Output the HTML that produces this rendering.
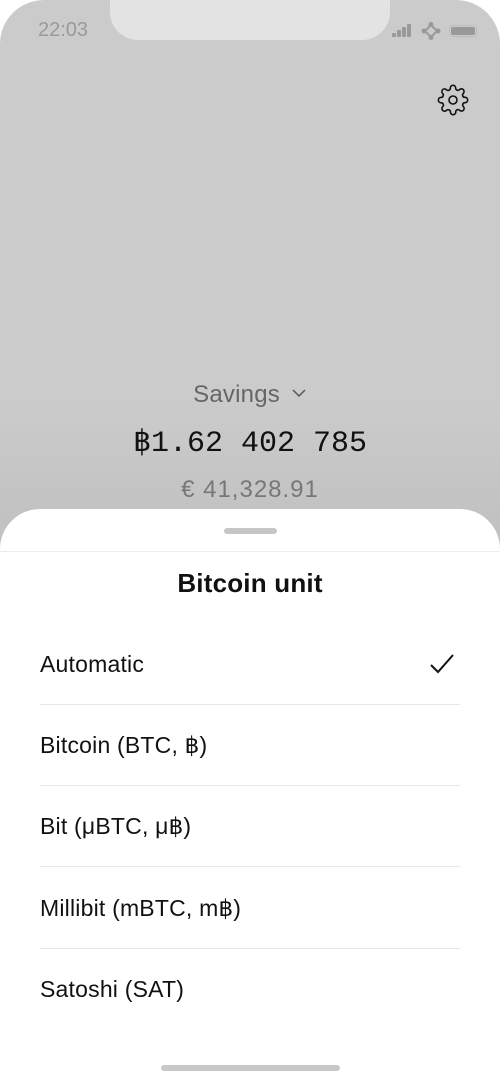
<!DOCTYPE html>
<html><head><style>
*{margin:0;padding:0;box-sizing:border-box}
body{width:500px;height:1083px;overflow:hidden;font-family:"Liberation Sans",sans-serif;background:#fff}
.top{position:absolute;left:0;top:0;width:500px;height:560px;background:linear-gradient(#cbcbcb 0,#cbcbcb 400px,#c2c2c2 520px);border-radius:44px 44px 0 0}
.notch{position:absolute;left:110px;top:0;width:280px;height:40px;background:#e3e3e3;border-radius:0 0 28px 28px}
.time{position:absolute;left:38px;top:19px;font-size:20px;color:#9a9a9a}
.sheet{position:absolute;left:0;top:509px;width:500px;height:574px;background:#fff;border-radius:40px 40px 0 0}
.handle{position:absolute;left:224px;top:19px;width:53px;height:6px;border-radius:3px;background:#c6c6c6}
.div0{position:absolute;left:0;top:42px;width:500px;height:1px;background:#ececec}
.title{position:absolute;top:59px;width:500px;text-align:center;font-size:26px;letter-spacing:0.2px;font-weight:bold;color:#111}
.row{position:absolute;left:40px;width:420px;height:81px;font-size:23px;letter-spacing:0.2px;color:#111;line-height:81px}
.row.b{border-bottom:1px solid #e8e8e8}
.c{position:absolute;top:386px;width:500px;text-align:center}
.home{position:absolute;left:161px;top:1065px;width:179px;height:6px;border-radius:3px;background:#c8c8c8}
</style></head><body>
<div class="top">
<div class="notch"></div>
<div class="time">22:03</div>
<svg style="position:absolute;left:392px;top:22px" width="90" height="18" viewBox="0 0 90 18">
<g fill="#999"><rect x="0" y="11" width="4" height="4" rx="1"/><rect x="5" y="8" width="4" height="7" rx="1"/><rect x="10" y="5" width="4" height="10" rx="1"/><rect x="15" y="2" width="4" height="13" rx="1"/>
<circle cx="39" cy="2.5" r="2.5"/><circle cx="39" cy="15.5" r="2.5"/><circle cx="32" cy="9" r="2.5"/><circle cx="46" cy="9" r="2.5"/></g>
<path d="M39 3 L45 9 L39 15 L33 9Z" fill="none" stroke="#999" stroke-width="2"/>
<rect x="57.5" y="3.5" width="27" height="11" rx="3" fill="none" stroke="#bbb"/><rect x="59" y="5" width="24" height="8" rx="2" fill="#999"/>
</svg>
<svg style="position:absolute;left:437px;top:84px" width="32" height="32" viewBox="0 0 24 24" fill="none" stroke="#111" stroke-width="1.2"><circle cx="12" cy="12" r="3"/><path d="M19.4 15a1.65 1.65 0 0 0 .33 1.82l.06.06a2 2 0 1 1-2.830 2.83l-.06-.06a1.65 1.65 0 0 0-1.82-.33 1.65 1.65 0 0 0-1 1.51V21a2 2 0 1 1-4 0v-.09A1.65 1.650 0 0 0 9 19.4a1.65 1.65 0 0 0-1.82.33l-.06.06a2 2 0 1 1-2.83-2.830l.06-.06a1.65 1.65 0 0 0 .33-1.82 1.65 1.65 0 0 0-1.51-1H3a2 2 0 1 1 0-4h.09A1.65 1.65 0 0 0 4.6 9a1.65 1.65 0 0 0-.33-1.82l-.06-.06a2 2 0 1 1 2.83-2.83l.06.06a1.65 1.65 0 0 0 1.82.33H9a1.65 1.65 0 0 0 1-1.51V3a2 2 0 1 1 4 0v.09a1.65 1.65 0 0 0 1 1.51 1.65 1.65 0 0 0 1.82-.33l.06-.06a2 2 0 1 1 2.83 2.83l-.06.06a1.65 1.65 0 0 0-.33 1.82V9a1.65 1.65 0 0 0 1.51 1H21a2 2 0 1 1 0 4h-.09a1.65 1.65 0 0 0-1.51 1z"/></svg>
<div class="c" style="top:381px;font-size:24px;letter-spacing:0.2px;color:#666">Savings <svg width="16" height="10" viewBox="0 0 16 10" style="margin-left:4px;vertical-align:4px"><path d="M2 2l6 6 6-6" fill="none" stroke="#555" stroke-width="1.5"/></svg></div>
<div class="c" style="top:424px;font-size:30px;color:#111;font-family:'Liberation Mono',monospace;letter-spacing:0px">฿1.62 402 785</div>
<div class="c" style="top:476px;font-size:24px;letter-spacing:1px;color:#777">€ 41,328.91</div>
</div>
<div class="sheet">
<div class="handle"></div>
<div class="div0"></div>
<div class="title">Bitcoin unit</div>
<div class="row b" style="top:115px">Automatic<svg style="position:absolute;right:6px;top:30px" width="24" height="20" viewBox="0 0 24 20"><path d="M1 11l7 7L23 1" fill="none" stroke="#111" stroke-width="2"/></svg></div>
<div class="row b" style="top:196px">Bitcoin (BTC, ฿)</div>
<div class="row b" style="top:277px">Bit (μBTC, μ฿)</div>
<div class="row b" style="top:359px">Millibit (mBTC, m฿)</div>
<div class="row" style="top:440px">Satoshi (SAT)</div>
</div>
<div class="home"></div>
</body></html>
